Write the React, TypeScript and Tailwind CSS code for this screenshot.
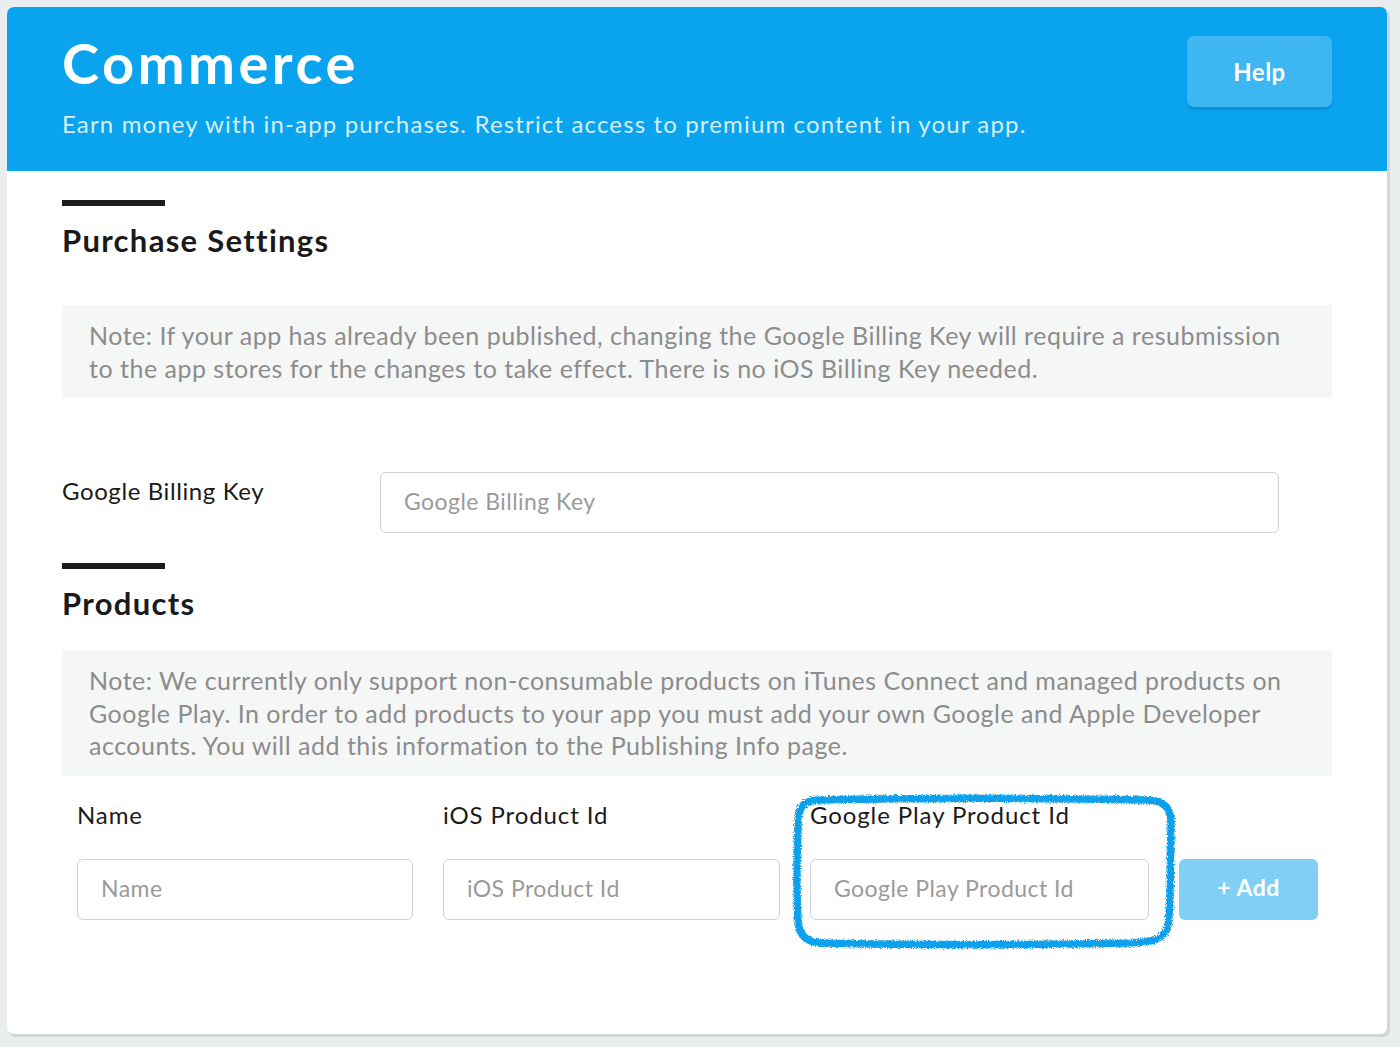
import React from "react"

const font = { fontFamily: "Lato, 'Noto Sans', sans-serif" }

function SectionTitle({ children }: { children: React.ReactNode }) {
  return (
    <div>
      <div className="w-[103px] h-[6px] bg-[#1c1c1c]" />
      <h2 className="mt-[15px] text-[31px] leading-[38px] font-bold text-[#1a1a1a] tracking-[1.3px]">
        {children}
      </h2>
    </div>
  )
}

function Note({ children }: { children: React.ReactNode }) {
  return (
    <div className="bg-[#f5f6f6] px-[27px] pt-[14px] pb-[14px] text-[25px] leading-[32.5px] text-[#8c8c8c] tracking-[0.5px]">
      {children}
    </div>
  )
}

function Field({ placeholder }: { placeholder: string }) {
  return (
    <input
      placeholder={placeholder}
      className="w-full h-[61px] rounded-[6px] border border-[#cfd3d3] bg-white px-[23px] pb-[3px] text-[23px] tracking-[0.45px] placeholder:text-[#9a9a9a] outline-none"
      style={font}
    />
  )
}

function Label({ children }: { children: React.ReactNode }) {
  return <label className="text-[24px] leading-[32px] text-[#1a1a1a] tracking-[0.9px]">{children}</label>
}

export default function App() {
  return (
    <div className="min-h-[1047px] bg-[#e9eded] p-[7px] pb-[12px]" style={font}>
      <div className="w-[1381px] h-[1027px] bg-white rounded-[7px] overflow-hidden shadow-[2px_3px_0_#d3d6d6] border-r border-[#d6d9d9]">
        {/* header */}
        <div className="bg-[#0aa3ee] h-[164px] px-[55px] flex justify-between items-start">
          <div className="pt-[26px]">
            <h1 className="text-[56px] leading-[60px] font-bold text-white tracking-[3.5px]">Commerce</h1>
            <p className="mt-[16px] text-[24px] leading-[30px] text-[#d6effc] tracking-[1.15px]">
              Earn money with in-app purchases. Restrict access to premium content in your app.
            </p>
          </div>
          <button className="mt-[29px] w-[145px] h-[71px] rounded-[7px] bg-[#3db6f2] text-white text-[24px] font-bold tracking-[0.5px] shadow-[0_3px_2px_rgba(0,90,150,0.25)]">
            Help
          </button>
        </div>

        {/* body */}
        <div className="px-[55px] pt-[29px]">
          <SectionTitle>Purchase Settings</SectionTitle>

          <div className="mt-[46px]">
            <Note>
              Note: If your app has already been published, changing the Google Billing Key will require a resubmission
              to the app stores for the changes to take effect. There is no iOS Billing Key needed.
            </Note>
          </div>

          <div className="mt-[74px] flex items-start">
            <label className="w-[318px] pt-[1px] text-[24px] text-[#1a1a1a] tracking-[0.6px]">Google Billing Key</label>
            <div className="w-[899px]">
              <Field placeholder="Google Billing Key" />
            </div>
          </div>

          <div className="mt-[30px]">
            <SectionTitle>Products</SectionTitle>
          </div>

          <div className="mt-[28px]">
            <Note>
              Note: We currently only support non-consumable products on iTunes Connect and managed products on
              Google Play. In order to add products to your app you must add your own Google and Apple Developer
              accounts. You will add this information to the Publishing Info page.
            </Note>
          </div>

          <div className="relative mt-[23px] px-[15px] grid grid-cols-[336px_337px_339px_139px] gap-x-[30px]">
            <div className="flex flex-col gap-[28px]">
              <Label>Name</Label>
              <Field placeholder="Name" />
            </div>
            <div className="flex flex-col gap-[28px]">
              <Label>iOS Product Id</Label>
              <Field placeholder="iOS Product Id" />
            </div>
            <div className="flex flex-col gap-[28px]">
              <Label>Google Play Product Id</Label>
              <Field placeholder="Google Play Product Id" />
            </div>
            <div className="flex flex-col justify-end">
              <button className="h-[61px] pb-[3px] rounded-[6px] bg-[#82cff5] text-white text-[23px] font-bold tracking-[0.5px]">+ Add</button>
            </div>

            {/* hand-drawn highlight */}
            <svg
              className="absolute left-[730px] top-[-6px] pointer-events-none"
              width="386"
              height="158"
              viewBox="0 0 386 158"
              fill="none"
            >
              <defs>
                <filter id="rough" x="-5%" y="-5%" width="110%" height="110%">
                  <feTurbulence type="fractalNoise" baseFrequency="0.9" numOctaves="2" seed="3" result="n" />
                  <feDisplacementMap in="SourceGraphic" in2="n" scale="5" />
                </filter>
              </defs>
              <path
                d="M25 7 C 130 5, 260 5, 356 7 C 374 8, 380 16, 379 34 C 378 70, 379 110, 376 132 C 373 146, 362 149, 340 150 C 240 152, 120 152, 30 150 C 13 149, 7 142, 6 127 C 4 95, 5 60, 6 32 C 6 14, 11 8, 25 7 Z"
                stroke="#11a0ec"
                strokeWidth="7.5"
                strokeLinecap="round"
                strokeLinejoin="round"
                filter="url(#rough)"
              />
            </svg>
          </div>
        </div>
      </div>
    </div>
  )
}
